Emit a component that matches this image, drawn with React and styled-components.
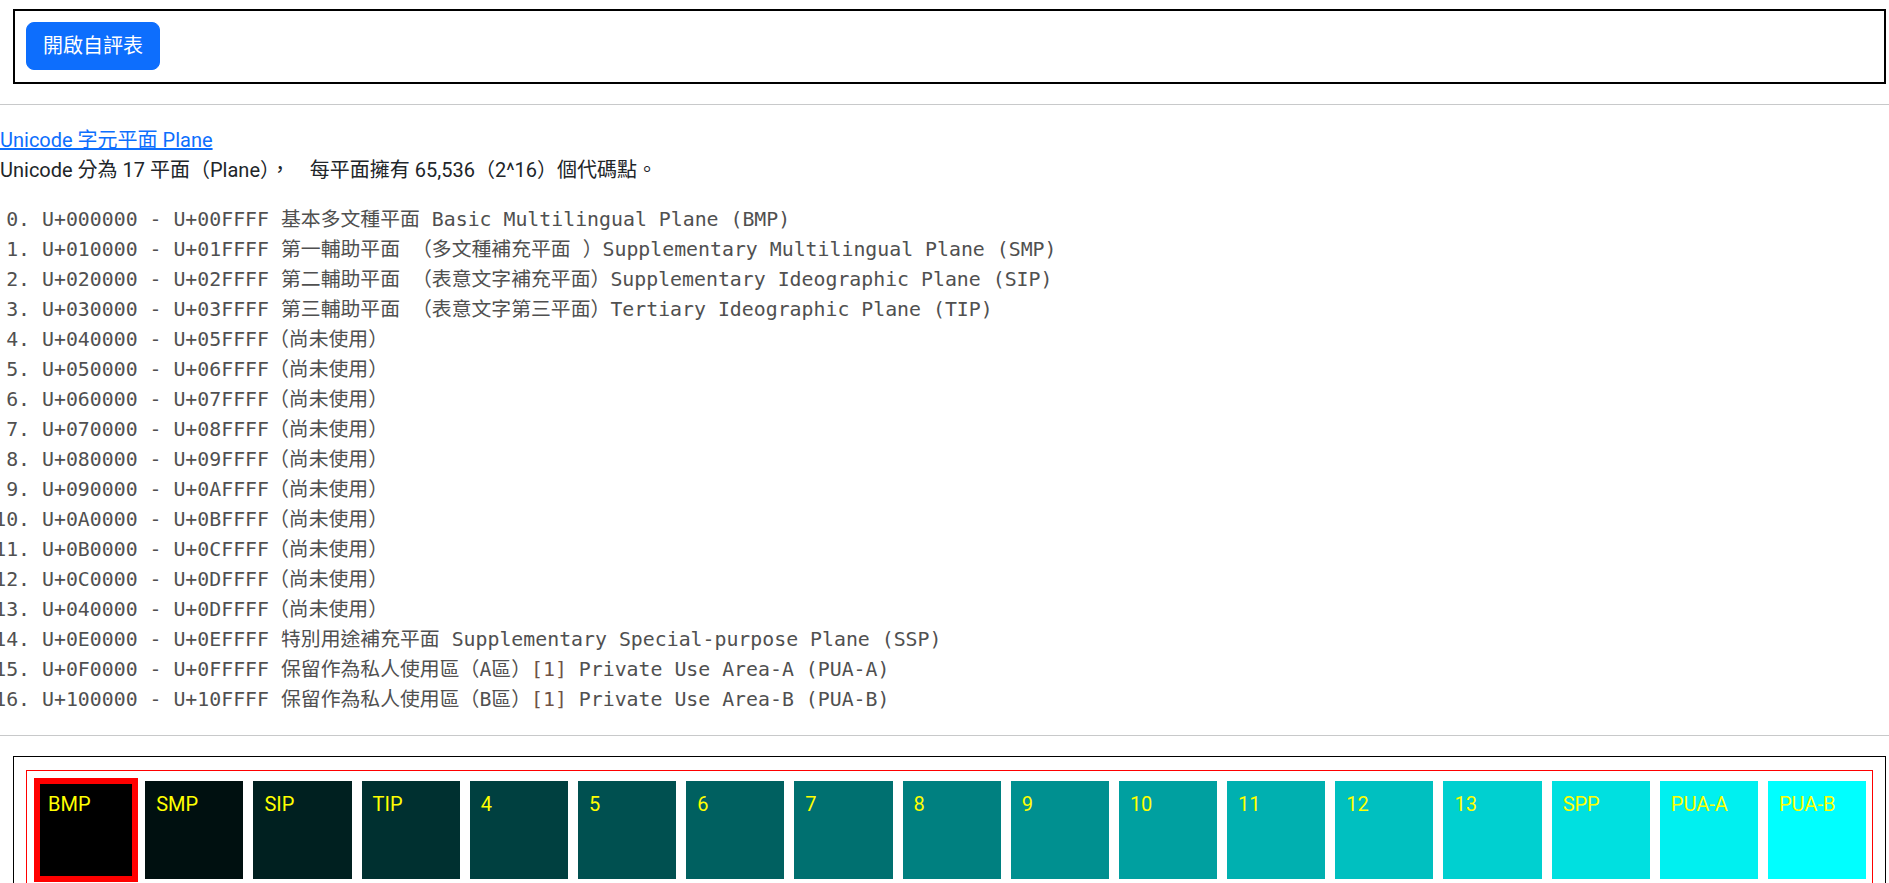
import styled, { createGlobalStyle } from "styled-components";

const GlobalStyle = createGlobalStyle`
  html {
    scrollbar-width: none;
  }
  body {
    margin: 0;
    background: #fff;
    color: #212529;
    font-family: Roboto, "Noto Sans CJK TC", sans-serif;
    font-size: 20px;
    line-height: 1.5;
  }
`;

const Toolbar = styled.div`
  margin: 9px 3px 0 13px;
  padding: 11px 11px 12px;
  border: 2px solid #000;
`;

const Button = styled.button`
  font: inherit;
  color: #fff;
  background: #0d6efd;
  border: 1px solid #0d6efd;
  border-radius: 8px;
  padding: 8px 16px;
  cursor: pointer;
`;

const Rule = styled.hr`
  margin: 20px 0;
  border: 0;
  border-top: 1px solid #c8c9ca;
`;

const Intro = styled.div`
  margin: 0;
`;

const Link = styled.a`
  color: #0d6efd;
  text-decoration: underline;
`;

const PlaneList = styled.ol`
  margin: 20px 0;
  padding-left: 42px;
  font-family: "DejaVu Sans Mono", "Noto Sans CJK TC", monospace;
  font-size: 19.85px;
  line-height: 30px;
  color: #505050;
`;

const PlaneItem = styled.li`
  white-space: pre;
`;

const Note = styled.span`
  color: #6e5146;
`;

const Panel = styled.div`
  margin: 0 3px 0 13px;
  padding: 13px 12px;
  border: 1px solid #000;
`;

const TileRow = styled.div`
  display: flex;
  flex-wrap: nowrap;
  padding: 5px 0 5px 5px;
  border: 1px solid #f00;
`;

const Tile = styled.div`
  flex: none;
  box-sizing: border-box;
  width: 98.2px;
  height: 98px;
  margin: 5px;
  padding: 8px 11px;
  color: #ff0;
  background: ${(p) => `rgb(0, ${p.$level}, ${p.$level})`};
  outline: ${(p) => (p.$active ? "6px solid #f00" : "none")};
  outline-offset: -3px;
`;

const planes = [
  ["U+000000 - U+00FFFF 基本多文種平面 Basic Multilingual Plane (BMP)"],
  ["U+010000 - U+01FFFF 第一輔助平面 （多文種補充平面 ）Supplementary Multilingual Plane (SMP)"],
  ["U+020000 - U+02FFFF 第二輔助平面 （表意文字補充平面）Supplementary Ideographic Plane (SIP)"],
  ["U+030000 - U+03FFFF 第三輔助平面 （表意文字第三平面）Tertiary Ideographic Plane (TIP)"],
  ["U+040000 - U+05FFFF（尚未使用）"],
  ["U+050000 - U+06FFFF（尚未使用）"],
  ["U+060000 - U+07FFFF（尚未使用）"],
  ["U+070000 - U+08FFFF（尚未使用）"],
  ["U+080000 - U+09FFFF（尚未使用）"],
  ["U+090000 - U+0AFFFF（尚未使用）"],
  ["U+0A0000 - U+0BFFFF（尚未使用）"],
  ["U+0B0000 - U+0CFFFF（尚未使用）"],
  ["U+0C0000 - U+0DFFFF（尚未使用）"],
  ["U+040000 - U+0DFFFF（尚未使用）"],
  ["U+0E0000 - U+0EFFFF 特別用途補充平面 Supplementary Special-purpose Plane (SSP)"],
  ["U+0F0000 - U+0FFFFF 保留作為私人使用區（A區）", " Private Use Area-A (PUA-A)"],
  ["U+100000 - U+10FFFF 保留作為私人使用區（B區）", " Private Use Area-B (PUA-B)"],
];

const tiles = [
  "BMP", "SMP", "SIP", "TIP", "4", "5", "6", "7", "8", "9",
  "10", "11", "12", "13", "SPP", "PUA-A", "PUA-B",
];

export default function App() {
  return (
    <>
      <GlobalStyle />
      <Toolbar>
        <Button type="button">開啟自評表</Button>
      </Toolbar>
      <Rule />
      <Intro>
        <Link href="#">Unicode 字元平面 Plane</Link>
        <br />
        Unicode 分為 17 平面（Plane），{"\u00a0\u00a0\u00a0 "}每平面擁有 65,536（2^16）個代碼點。
      </Intro>
      <PlaneList start={0}>
        {planes.map(([text, rest], i) => (
          <PlaneItem key={i}>
            {text}
            {rest && (
              <>
                <Note>[1]</Note>
                {rest}
              </>
            )}
          </PlaneItem>
        ))}
      </PlaneList>
      <Rule />
      <Panel>
        <TileRow>
          {tiles.map((name, i) => (
            <Tile key={name} $level={Math.min(255, i * 16)} $active={i === 0}>
              {name}
            </Tile>
          ))}
        </TileRow>
      </Panel>
    </>
  );
}
